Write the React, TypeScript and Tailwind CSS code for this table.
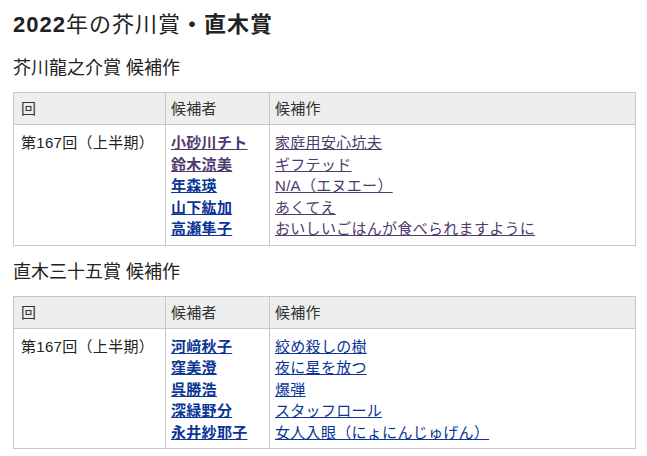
import React from "react";

type Entry = { name: string; work: string; nameVisited?: boolean; workVisited?: boolean };

const akutagawa: Entry[] = [
  { name: "小砂川チト", work: "家庭用安心坑夫", nameVisited: true, workVisited: true },
  { name: "鈴木涼美", work: "ギフテッド", nameVisited: true, workVisited: true },
  { name: "年森瑛", work: "N/A（エヌエー）", workVisited: true },
  { name: "山下紘加", work: "あくてえ", workVisited: true },
  { name: "高瀬隼子", work: "おいしいごはんが食べられますように", workVisited: true },
];

const naoki: Entry[] = [
  { name: "河﨑秋子", work: "絞め殺しの樹" },
  { name: "窪美澄", work: "夜に星を放つ" },
  { name: "呉勝浩", work: "爆弾" },
  { name: "深緑野分", work: "スタッフロール" },
  { name: "永井紗耶子", work: "女人入眼（にょにんじゅげん）" },
];

const CandidateTable: React.FC<{ entries: Entry[] }> = ({ entries }) => {
  return (
    <table className="w-[623px] table-fixed border-collapse border border-[#c8c8c8] text-[15px] tracking-[0.3px] text-[#222]">
      <colgroup>
        <col className="w-[152px]" />
        <col className="w-[104px]" />
        <col />
      </colgroup>
      <thead>
        <tr className="bg-[#eeeeee] text-[#333]">
          <th className="border border-[#c8c8c8] px-[7px] py-[5px] text-left font-normal leading-[21px]">回</th>
          <th className="border border-[#c8c8c8] px-[5px] py-[5px] text-left font-normal leading-[21px]">候補者</th>
          <th className="border border-[#c8c8c8] px-[5px] py-[5px] text-left font-normal leading-[21px]">候補作</th>
        </tr>
      </thead>
      <tbody>
        <tr>
          <td className="border border-[#c8c8c8] px-[7px] pt-[7px] pb-[5px] align-top leading-[21.5px]">
            第167回（上半期）
          </td>
          <td className="border border-[#c8c8c8] px-[5px] pt-[7px] pb-[5px] align-top leading-[21.5px]">
            {entries.map((e) => (
              <div key={e.name}>
                <a
                  href="#"
                  className={`font-bold underline ${e.nameVisited ? "text-[#4e3a6e]" : "text-[#0b3597]"}`}
                >
                  {e.name}
                </a>
              </div>
            ))}
          </td>
          <td className="border border-[#c8c8c8] px-[5px] pt-[7px] pb-[5px] align-top leading-[21.5px]">
            {entries.map((e) => (
              <div key={e.work}>
                <a
                  href="#"
                  className={`underline ${e.workVisited ? "text-[#4e3a6e]" : "text-[#0b3597]"}`}
                >
                  {e.work}
                </a>
              </div>
            ))}
          </td>
        </tr>
      </tbody>
    </table>
  );
};

export default function App() {
  return (
    <div
      className="min-h-[456px] bg-white pl-[13px] pt-[12px] text-[#222]"
      style={{ fontFamily: '"Liberation Sans", "Noto Sans CJK JP", sans-serif' }}
    >
      <h1 className="text-[22px] leading-[26px] tracking-[1px] font-normal">
        <b>2022</b>年の芥川賞<b>・直木賞</b>
      </h1>
      <h2 className="mt-[18px] text-[18px] leading-[24px] font-normal">芥川龍之介賞 候補作</h2>
      <div className="mt-[12px]">
        <CandidateTable entries={akutagawa} />
      </div>
      <h2 className="mt-[14px] text-[18px] leading-[24px] font-normal">直木三十五賞 候補作</h2>
      <div className="mt-[12px]">
        <CandidateTable entries={naoki} />
      </div>
    </div>
  );
}
